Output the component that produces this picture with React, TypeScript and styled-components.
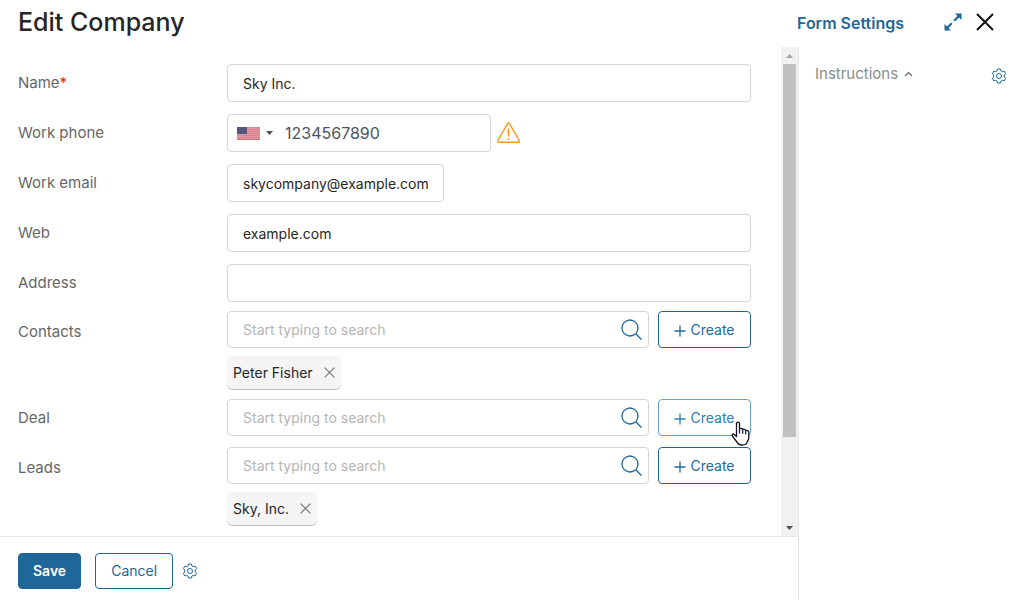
import React, { useId, useState } from "react";
import styled, { createGlobalStyle } from "styled-components";

const blue = "#1f6799";
const line = "#d6d6d6";

const GlobalStyle = createGlobalStyle`
  * { box-sizing: border-box; }
  body { margin: 0; background: #fff; }
  body, button, input {
    font-family: Inter, "Liberation Sans", sans-serif;
    font-size: 14px;
    line-height: 20px;
  }
`;

const Page = styled.div`
  display: flex;
  flex-direction: column;
  min-height: 100vh;
  color: #262626;
`;

const Header = styled.header`
  display: flex;
  align-items: center;
  height: 47px;
  padding: 0 25px 4px 18px;
`;

const Title = styled.h1`
  flex: 1;
  margin: 0;
  font-size: 25px;
  line-height: 32px;
  font-weight: 500;
`;

const SettingsLink = styled.a`
  margin-right: 40px;
  padding-top: 2px;
  color: ${blue};
  font-size: 16px;
  font-weight: 600;
  text-decoration: none;
`;

const IconButton = styled.button`
  display: inline-flex;
  align-items: center;
  justify-content: center;
  padding: 0;
  border: 0;
  background: none;
  color: ${blue};
  cursor: pointer;
`;

const HeaderActions = styled.div`
  display: flex;
  align-items: center;
  gap: 14px;
`;

const Body = styled.div`
  display: flex;
  flex: 1;
`;

const Main = styled.main`
  display: flex;
  flex-direction: column;
  flex: 1;
  min-width: 0;
  border-right: 1px solid #e6e6e6;
`;

const ScrollArea = styled.div`
  display: flex;
  flex: 1;
`;

const Form = styled.form`
  flex: 1;
  min-width: 0;
  padding: 17px 30px 8px 18px;
`;

const Fields = styled.div<{ $gap: number }>`
  display: flex;
  flex-direction: column;
  gap: ${(p) => p.$gap}px;
  & + & { margin-top: 9px; }
`;

const Row = styled.div`
  display: grid;
  grid-template-columns: 209px minmax(0, 1fr);
  align-items: start;
`;

const Label = styled.label<{ $lowered?: boolean }>`
  padding-top: ${(p) => (p.$lowered ? 2 : 0)}px;
  color: #666;
  font-size: 15px;
  line-height: 38px;
`;

const Required = styled.span`
  color: #e8201c;
`;

const TextInput = styled.input<{ $width?: string }>`
  width: ${(p) => p.$width ?? "100%"};
  height: 38px;
  padding: 0 15px;
  border: 1px solid ${line};
  border-radius: 4px;
  background: #fff;
  color: #262626;
  outline: none;
`;

const PhoneLine = styled.div`
  display: flex;
  align-items: center;
  gap: 6px;
`;

const PhoneBox = styled.div`
  display: flex;
  align-items: center;
  width: 264px;
  height: 38px;
  padding-left: 9px;
  border: 1px solid ${line};
  border-radius: 4px;
`;

const CountryButton = styled(IconButton)`
  gap: 6px;
  margin-right: 12px;
`;

const PhoneInput = styled.input`
  flex: 1;
  min-width: 0;
  padding: 0;
  border: 0;
  background: none;
  color: #4d545e;
  font-size: 16px;
  outline: none;
`;

const LookupLine = styled.div`
  display: flex;
  gap: 9px;
`;

const SearchBox = styled.div`
  display: flex;
  align-items: center;
  flex: 1;
  min-width: 0;
  height: 37px;
  padding: 0 6px 0 15px;
  border: 1px solid ${line};
  border-radius: 4px;
`;

const SearchInput = styled.input`
  flex: 1;
  min-width: 0;
  padding: 0;
  border: 0;
  background: none;
  outline: none;
  &::placeholder { color: #b5b5b5; opacity: 1; }
`;

const Button = styled.button<{ $primary?: boolean; $hovered?: boolean }>`
  position: relative;
  display: flex;
  align-items: center;
  justify-content: center;
  gap: 4px;
  height: 36px;
  padding: 0 14px;
  border: 1px solid ${(p) => (p.$hovered ? "#61a5d3" : blue)};
  border-radius: 4px;
  background: ${(p) => (p.$primary ? blue : "#fff")};
  color: ${(p) => (p.$primary ? "#fff" : p.$hovered ? "#2f7db5" : blue)};
  font-weight: ${(p) => (p.$primary ? 600 : 400)};
  cursor: pointer;
`;

const CreateButton = styled(Button)`
  width: 93px;
  height: 37px;
`;

const Pointer = styled.svg`
  position: absolute;
  left: 72px;
  top: 21px;
  z-index: 1;
`;

const Tag = styled.div`
  display: inline-flex;
  align-items: center;
  gap: 11px;
  height: 33px;
  margin-top: 8px;
  padding: 0 6px;
  border-radius: 5px;
  background: #f5f5f5;
  box-shadow: 0 1px 0 #bfbfbf;
  vertical-align: top;
`;

const Scrollbar = styled.div`
  display: flex;
  flex-direction: column;
  width: 17px;
  background: #f1f1f1;
`;

const ScrollArrow = styled(IconButton)`
  height: 17px;
`;

const Track = styled.div`
  flex: 1;
  padding: 0 2px;
`;

const Thumb = styled.div`
  height: 82%;
  background: #c1c1c1;
`;

const Footer = styled.footer`
  display: flex;
  align-items: center;
  height: 64px;
  padding: 5px 18px 0;
  border-top: 1px solid #e6e6e6;
`;

const CancelButton = styled(Button)`
  margin: 0 9px 0 14px;
  padding: 0 15px;
`;

const Aside = styled.aside`
  width: 220px;
  padding: 17px 12px 0 16px;
`;

const AsideHead = styled.div`
  display: flex;
  align-items: flex-end;
  justify-content: space-between;
`;

const Collapse = styled(IconButton)`
  gap: 6px;
  color: #8c8c8c;
  font-size: 15px;
`;

const Gear = () => (
  <svg width="16" height="16" viewBox="0 0 16 16" fill="none" stroke={blue} strokeLinejoin="round">
    <path d="M6.600 1h2.800l.5 1.900 1.400.8 1.900-.6 1.500 2.500-1.400 1.400v2l1.400 1.400-1.500 2.500-1.900-.6-1.400.8-.5 1.900H6.600l-.5-1.900-1.400-.8-1.900.6-1.500-2.500L2.700 9V7L1.300 5.600l1.500-2.500 1.900.6 1.400-.8z" />
    <circle cx="8" cy="8" r="2.500" />
  </svg>
);

const Cross = ({ size, color, width }: { size: number; color: string; width: number }) => (
  <svg width={size} height={size} viewBox="0 0 18 18" stroke={color} strokeWidth={width}>
    <path d="M1 1l16 16M17 1L1 17" />
  </svg>
);

const Expand = () => (
  <svg width="18" height="18" viewBox="0 0 18 18" fill={blue}>
    <path d="M11 0.500h6.500V7zM0.500 11v6.500H7z" />
    <path d="M15.500 2.500l-5.300 5.300M7.800 10.200L2.500 15.500" stroke={blue} strokeWidth="2.200" />
  </svg>
);

const Flag = () => (
  <svg width="23" height="13" viewBox="0 0 23 13">
    <rect width="23" height="13" fill="#e2959c" />
    <path d="M0 .5h23M0 2.500h23M0 4.500h23M0 6.500h23M0 8.500h23M0 10.500h23" stroke="#d8858f" />
    <path d="M0 12.500h23" stroke="#cf6e7b" />
    <rect width="10" height="7" fill="#555781" />
  </svg>
);

const Triangle = ({ up, color = "#505050" }: { up?: boolean; color?: string }) => (
  <svg width="7" height="4" viewBox="0 0 7 4" fill={color}>
    <path d={up ? "M0 4h7L3.500 0z" : "M0 0h7L3.500 4z"} />
  </svg>
);

const Warning = () => (
  <svg width="23" height="23" viewBox="0 0 23 23" fill="none" stroke="#fb9a1f" strokeLinejoin="round" strokeLinecap="round">
    <path d="M10.500 1.600L.9 18.400Q.3 20.300 1.900 20.300H21.100Q22.700 20.300 22.100 18.400L12.500 1.600Q11.500 0 10.500 1.600z" strokeWidth="1.400" />
    <path d="M11.500 7v6.700M11.500 17v.2" strokeWidth="1.700" />
  </svg>
);

const Search = () => (
  <svg width="21" height="21" viewBox="0 0 21 21" fill="none" stroke={blue} strokeWidth="1.300">
    <circle cx="9" cy="9" r="8" />
    <path d="M14.700 14.700L20.500 20.500" />
  </svg>
);

const Plus = () => (
  <svg width="12" height="14" viewBox="0 0 12 14" stroke="currentColor" strokeWidth="1.300">
    <path d="M6 2.500v11M.5 8h11" />
  </svg>
);

const HandPointer = () => (
  <Pointer width="20" height="26" viewBox="0 0 20 26" aria-hidden="true">
    <path
      d="M5.500 2.500C5.500.6 8.500.6 8.500 2.500V8C9.500 6.800 11.500 7.200 11.700 8.600 12.800 7.700 14.500 8.300 14.700 9.700 16 9 17.800 9.700 17.800 11.500V16.500C17.800 18.500 16.600 20 16.200 21 15.800 23.200 13.500 24 11 24 8.500 24 7 23 6.300 21.500L2 16C.6 14 1.200 12.500 3 13.200L5.500 15.500z"
      fill="#fff"
      stroke="#15152a"
      strokeWidth="1.300"
      strokeLinejoin="round"
    />
    <path d="M8.500 8v4.500M11.700 8.800v4M14.700 10v3.500" stroke="#15152a" strokeWidth="1.200" />
  </Pointer>
);

function TextField({ label, value, required, width, type = "text" }: {
  label: string; value: string; required?: boolean; width?: string; type?: string;
}) {
  const id = useId();
  return (
    <Row>
      <Label htmlFor={id}>
        {label}
        {required && <Required>*</Required>}
      </Label>
      <TextInput id={id} type={type} defaultValue={value} $width={width} />
    </Row>
  );
}

function PhoneField({ label, value }: { label: string; value: string }) {
  const id = useId();
  return (
    <Row>
      <Label htmlFor={id}>{label}</Label>
      <PhoneLine>
        <PhoneBox>
          <CountryButton type="button" aria-label="Country">
            <Flag />
            <Triangle />
          </CountryButton>
          <PhoneInput id={id} type="tel" defaultValue={value} />
        </PhoneBox>
        <Warning />
      </PhoneLine>
    </Row>
  );
}

function LookupField({ label, initial, hovered }: { label: string; initial?: string; hovered?: boolean }) {
  const id = useId();
  const [selected, setSelected] = useState(initial);
  return (
    <Row>
      <Label htmlFor={id} $lowered={!!initial}>{label}</Label>
      <div>
        <LookupLine>
          <SearchBox>
            <SearchInput id={id} placeholder="Start typing to search" />
            <IconButton type="button" aria-label="Search"><Search /></IconButton>
          </SearchBox>
          <CreateButton type="button" $hovered={hovered}>
            <Plus />
            Create
            {hovered && <HandPointer />}
          </CreateButton>
        </LookupLine>
        {selected && (
          <Tag>
            {selected}
            <IconButton type="button" aria-label="Remove" onClick={() => setSelected(undefined)}>
              <Cross size={11} color="#777" width={2} />
            </IconButton>
          </Tag>
        )}
      </div>
    </Row>
  );
}

export default function App() {
  return (
    <Page>
      <GlobalStyle />
      <Header>
        <Title>Edit Company</Title>
        <SettingsLink href="#settings">Form Settings</SettingsLink>
        <HeaderActions>
          <IconButton aria-label="Expand"><Expand /></IconButton>
          <IconButton aria-label="Close"><Cross size={18} color="#111" width={2} /></IconButton>
        </HeaderActions>
      </Header>
      <Body>
        <Main>
          <ScrollArea>
            <Form id="company">
              <Fields $gap={12}>
                <TextField label="Name" value="Sky Inc." required />
                <PhoneField label="Work phone" value="1234567890" />
                <TextField label="Work email" value="skycompany@example.com" type="email" width="217px" />
                <TextField label="Web" value="example.com" />
                <TextField label="Address" value="" />
              </Fields>
              <Fields $gap={10}>
                <LookupField label="Contacts" initial="Peter Fisher" />
                <LookupField label="Deal" hovered />
                <LookupField label="Leads" initial="Sky, Inc." />
              </Fields>
            </Form>
            <Scrollbar>
              <ScrollArrow aria-label="Scroll up"><Triangle up color="#a3a3a3" /></ScrollArrow>
              <Track><Thumb /></Track>
              <ScrollArrow aria-label="Scroll down"><Triangle /></ScrollArrow>
            </Scrollbar>
          </ScrollArea>
          <Footer>
            <Button type="submit" form="company" $primary>Save</Button>
            <CancelButton type="button">Cancel</CancelButton>
            <IconButton aria-label="Button settings"><Gear /></IconButton>
          </Footer>
        </Main>
        <Aside>
          <AsideHead>
            <Collapse>
              Instructions
              <svg width="9" height="6" viewBox="0 0 9 6" fill="none" stroke="#666" strokeWidth="1.200">
                <path d="M1 5l3.500-3.500L8 5" />
              </svg>
            </Collapse>
            <IconButton aria-label="Panel settings"><Gear /></IconButton>
          </AsideHead>
        </Aside>
      </Body>
    </Page>
  );
}
